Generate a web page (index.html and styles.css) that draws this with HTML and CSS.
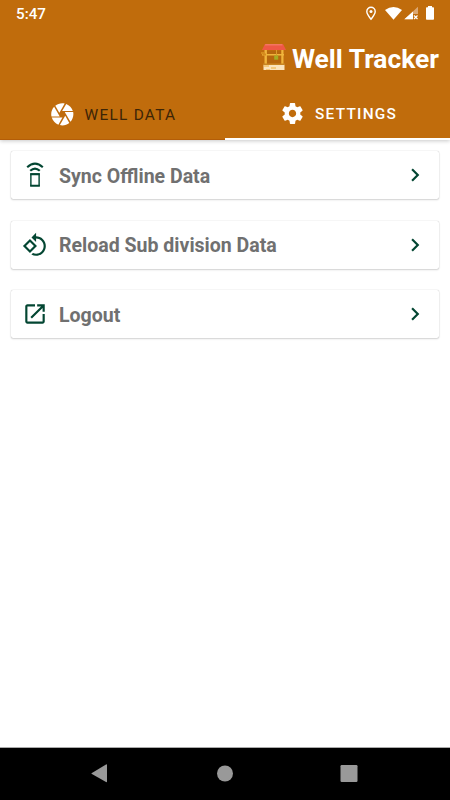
FILE: index.html
```
<!DOCTYPE html>
<html lang="en">
<head>
<meta charset="utf-8">
<title>Well Tracker</title>
<link rel="stylesheet" href="styles.css">
</head>
<body>
<header class="header">
  <div class="status">
    <span class="time">5:47</span>
    <svg class="status-icons" width="72" height="16" viewBox="0 0 72 16">
      <path fill="none" stroke="#fff" stroke-width="1.4" d="M6 13.2C4 10.6 1.8 8.200 1.800 5.500a4.200 4.200 0 0 1 8.400 0C10.200 8.200 8 10.600 6 13.200z"/>
      <circle cx="6" cy="5.500" r="1.500" fill="#fff"/>
      <path fill="#fff" d="M20 4Q28.500-2.200 37 4L28.500 13.700z"/>
      <path fill="#dca873" d="M53 .700V8h-5v5.200h-8.500z"/>
      <path fill="#fff" d="M48 5.500V13.200h-8.700z"/>
      <path stroke="#fff" stroke-width="1.200" d="M49 9.500l3.500 3.500m0-3.500L49 13"/>
      <path fill="#fff" d="M63 0h4v1.300h1.200q.8 0 .8.800v10.900q0 .8-.8.800h-6.400q-.8 0-.8-.8V2.100q0-.8.8-.8H63z"/>
    </svg>
  </div>
  <div class="brand">
    <svg class="logo" width="26" height="28" viewBox="0 0 26 28">
      <path fill="#7d4d12" d="M5 8h15v13H5z" opacity=".14"/>
      <path fill="#f0b43c" d="M3.500 7h2.400v14H3.500zM20.300 7h2.200v14h-2.200zM1 11h22v1.600H1z"/>
      <path fill="#d68b1d" d="M0 9h3v1.500h2v2H1.500V11H0z"/>
      <path fill="#ef5846" d="M4 1h18l3 6H1z"/>
      <path fill="#f47561" d="M4.500 1H21l.5 1.500H3.700z"/>
      <path fill="#d99a2b" d="M15 7h1v6h-1z"/>
      <path fill="#a5ad23" d="M13.200 12.500h4v4.200h-4z"/>
      <path fill="#c98522" d="M2 20.500h22V22H2z"/>
      <path fill="#fbe4bd" d="M2.500 22h21v5h-21z"/>
      <path fill="#f5ca7c" d="M3 22h5v2H3zm7 2h5v2h-5zm-5 2h4v1H5z"/>
    </svg>
    <h1 class="title">Well Tracker</h1>
  </div>
  <nav class="tabs">
    <div class="tab tab-data">
      <svg width="26.600" height="26.600" viewBox="0 0 24 24" fill="#fff"><path d="M9.400 10.500l4.770-8.260C13.470 2.090 12.750 2 12 2c-2.400 0-4.600.850-6.320 2.250l3.660 6.350.060-.100zM21.540 9c-.920-2.920-3.150-5.260-6-6.340L11.880 9h9.660zm.260 1h-7.490l.290.500 4.760 8.250C21 16.970 22 14.610 22 12c0-.690-.070-1.350-.200-2zM8.540 12l-3.900-6.750C3.010 7.030 2 9.390 2 12c0 .690.070 1.350.200 2h7.490l-1.150-2zm-6.080 3c.920 2.920 3.150 5.260 6 6.340L12.120 15H2.460zm11.270 0l-3.900 6.760c.700.150 1.420.240 2.170.240 2.400 0 4.600-.850 6.320-2.250l-3.660-6.350-.930 1.600z"/></svg>
      <span>WELL DATA</span>
    </div>
    <div class="tab tab-settings">
      <svg width="25" height="25" viewBox="0 0 24 24" fill="#fff"><path d="M19.430 12.980c.040-.320.070-.640.070-.980s-.030-.660-.070-.980l2.110-1.650c.190-.150.240-.420.120-.640l-2-3.460c-.120-.220-.390-.300-.610-.220l-2.490 1c-.520-.400-1.080-.730-1.690-.980l-.380-2.650C14.460 2.180 14.250 2 14 2h-4c-.250 0-.460.180-.490.420l-.380 2.650c-.610.250-1.170.590-1.690.980l-2.490-1c-.230-.090-.490 0-.610.220l-2 3.460c-.130.220-.070.490.120.640l2.110 1.650c-.040.320-.070.650-.070.980s.030.660.070.980l-2.110 1.650c-.190.150-.240.420-.120.640l2 3.460c.120.220.390.300.610.220l2.490-1c.520.400 1.080.730 1.690.980l.380 2.650c.030.240.240.420.490.420h4c.250 0 .460-.180.490-.420l.380-2.650c.610-.250 1.170-.590 1.690-.980l2.490 1c.230.090.490 0 .610-.220l2-3.460c.120-.220.070-.490-.120-.640l-2.110-1.650zM12 15.500c-1.930 0-3.500-1.570-3.500-3.500s1.570-3.500 3.500-3.500 3.500 1.570 3.500 3.500-1.570 3.500-3.500 3.500z"/></svg>
      <span>SETTINGS</span>
    </div>
  </nav>
</header>
<main class="list">
  <div class="card">
    <svg class="icon" viewBox="0 0 24 24"><path fill="none" stroke="#034632" stroke-width="2" d="M4.800 4.800Q12-1.600 19.200 4.800M7.600 8.100Q12 4 16.400 8.100"/><path fill="none" stroke="#034632" stroke-width="1.300" d="M8.200 11h7.600v11H8.200z"/><path fill="#034632" d="M7.600 10.300h8.800v1.900H7.600zM7.600 21h8.800v1.700H7.600z"/></svg>
    <span class="label">Sync Offline Data</span>
    <svg class="icon" viewBox="0 0 24 24"><path d="M10 6L8.590 7.410 13.170 12l-4.580 4.590L10 18l6-6z"/></svg>
  </div>
  <div class="card">
    <svg class="icon" viewBox="0 0 24 24"><path d="M7.340 6.410L.860 12.900l6.490 6.480 6.490-6.480-6.500-6.490zM3.690 12.900l3.660-3.660L11 12.900l-3.660 3.660-3.650-3.660zm15.670-6.260C17.610 4.880 15.300 4 13 4V.760L8.760 5 13 9.240V6c1.790 0 3.580.680 4.950 2.050 2.730 2.730 2.730 7.170 0 9.900C16.580 19.320 14.790 20 13 20c-.970 0-1.940-.210-2.840-.610l-1.490 1.490C10.020 21.620 11.510 22 13 22c2.300 0 4.610-.880 6.360-2.640 3.520-3.510 3.520-9.210 0-12.720z"/></svg>
    <span class="label">Reload Sub division Data</span>
    <svg class="icon" viewBox="0 0 24 24"><path d="M10 6L8.590 7.410 13.170 12l-4.580 4.590L10 18l6-6z"/></svg>
  </div>
  <div class="card">
    <svg class="icon" viewBox="0 0 24 24"><path d="M19 19H5V5h7V3H5c-1.110 0-2 .900-2 2v14c0 1.100.890 2 2 2h14c1.100 0 2-.900 2-2v-7h-2v7zM14 3v2h3.590l-9.830 9.830 1.410 1.410L19 6.410V10h2V3h-7z"/></svg>
    <span class="label">Logout</span>
    <svg class="icon" viewBox="0 0 24 24"><path d="M10 6L8.590 7.410 13.170 12l-4.580 4.590L10 18l6-6z"/></svg>
  </div>
</main>
<footer class="navbar">
  <svg width="18" height="20" viewBox="0 0 18 20"><path fill="#999" d="M.500 9.200L15 .500q1-.500 1 .500v16.500q0 1-1 .500L.500 9.800z"/></svg>
  <svg width="18" height="20" viewBox="0 0 18 20"><circle cx="9" cy="9.500" r="8" fill="#999"/></svg>
  <svg width="18" height="20" viewBox="0 0 18 20"><rect x=".500" y="1" width="17" height="17" rx="1.200" fill="#999"/></svg>
</footer>
</body>
</html>
```

FILE: styles.css
```
* { box-sizing: border-box; }
body {
  margin: 0;
  width: 450px;
  height: 800px;
  display: flex;
  flex-direction: column;
  overflow: hidden;
  background: #fff;
  font-family: Roboto, sans-serif;
}
svg { display: block; flex: none; }
.header {
  height: 140px;
  background: #c06c0c;
  box-shadow: 0 1px 4px rgba(0, 0, 0, .22);
}
.status {
  height: 28px;
  padding: 0 13px 0 16px;
  display: flex;
  align-items: center;
  justify-content: space-between;
  color: #fff;
}
.time { font-size: 15.200px; font-weight: 500; line-height: 28px; }
.brand {
  height: 61px;
  padding: 0 11px 0 0;
  display: flex;
  align-items: center;
  justify-content: flex-end;
  gap: 5px;
}
.logo { margin-top: -4px; }
.title {
  margin: 0;
  color: #fff;
  font-size: 26.400px;
  line-height: 32px;
  font-weight: 700;
}
.tabs { display: flex; height: 51px; }
.tab {
  flex: none;
  width: 225px;
  display: flex;
  align-items: center;
  gap: 9px;
  font-size: 15.400px;
  letter-spacing: 1.250px;
  white-space: nowrap;
}
.tab-data { padding-left: 49px; color: #3d2507; border-bottom: 1px solid #b35d08; font-weight: 400; }
.tab-settings { padding-left: 55px; color: #fff; border-bottom: 2px solid #fff; font-weight: 500; }
.tab span { padding-top: 1px; }
.tab-settings span { margin-left: 1px; }
.list {
  flex: 1;
  padding: 11px 11px 0;
  display: flex;
  flex-direction: column;
  gap: 21.500px;
}
.card {
  height: 48px;
  padding: 0 11px;
  display: flex;
  align-items: center;
  background: #fff;
  border-radius: 2px;
  box-shadow: 0 0 1px rgba(0, 0, 0, .3), 0 1px 2px rgba(0, 0, 0, .16);
}
.icon { width: 26px; height: 26px; fill: #034632; }
.label {
  flex: 1;
  margin-left: 11px;
  padding-top: 3px;
  color: #707070;
  font-size: 19.550px;
  line-height: 24px;
  font-weight: 700;
}
.navbar {
  height: 53px;
  padding: 0 92px 0 91px;
  display: flex;
  align-items: center;
  justify-content: space-between;
  background: #000;
  border-top: 1px solid #aaa;
}
```
